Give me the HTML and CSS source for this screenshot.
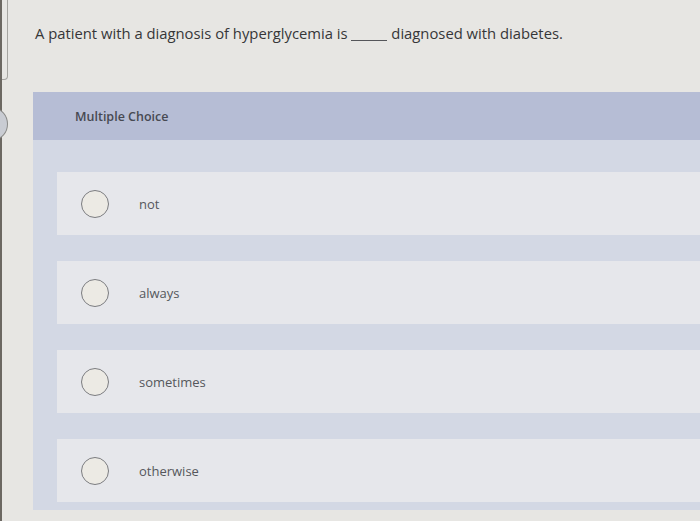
FILE: index.html
```html
<!DOCTYPE html>
<html lang="en">
<head>
<meta charset="utf-8">
<title>Multiple Choice</title>
<link rel="stylesheet" href="styles.css">
</head>
<body>
<div class="screen">
  <div class="edge"></div>
  <div class="side">
    <div class="side-box"></div>
    <div class="side-dot"></div>
  </div>
  <main class="main">
    <p class="question">A patient with a diagnosis of hyperglycemia is <span class="blank"></span> diagnosed with diabetes.</p>
    <section class="panel">
      <header class="panel-head">Multiple Choice</header>
      <div class="panel-body">
        <label class="option"><span class="radio"></span><span class="opt-text">not</span></label>
        <label class="option"><span class="radio"></span><span class="opt-text">always</span></label>
        <label class="option"><span class="radio"></span><span class="opt-text">sometimes</span></label>
        <label class="option"><span class="radio"></span><span class="opt-text">otherwise</span></label>
      </div>
    </section>
  </main>
</div>
</body>
</html>
```

FILE: styles.css
```css
html, body {
  margin: 0;
  padding: 0;
  background: #e7e6e3;
}
.screen {
  display: flex;
  width: 700px;
  height: 521px;
  overflow: hidden;
  font-family: "Open Sans", Lato, sans-serif;
  background: #e7e6e3;
}
.edge {
  width: 2px;
  flex: none;
  background: #6c6862;
}
.side {
  width: 6px;
  flex: none;
  display: flex;
  flex-direction: column;
}
.side-box {
  height: 90px;
  margin-top: -10px;
  border: 1px solid #a5a4a0;
  border-left: none;
  border-radius: 0 4px 4px 0;
  box-sizing: border-box;
  width: 6px;
}
.side-dot {
  width: 28px;
  height: 32px;
  margin-top: 28px;
  margin-left: -22px;
  border: 1px solid #8a8a88;
  border-radius: 50%;
  background: #c9ccd3;
  box-sizing: border-box;
}
.main {
  flex: 1;
  min-width: 0;
  padding-left: 25px;
}
.question {
  margin: 24px 0 0 2px;
  font-size: 14.8px;
  font-weight: 500;
  line-height: 18px;
  color: #363638;
  white-space: nowrap;
}
.blank {
  display: inline-block;
  width: 36px;
  border-bottom: 1px solid #55565a;
  vertical-align: -2px;
}
.panel {
  margin-top: 50px;
  background: #d3d8e4;
  padding-bottom: 8px;
}
.panel-head {
  height: 48px;
  display: flex;
  align-items: center;
  padding-left: 42px;
  background: #b6bdd5;
  font-size: 12.5px;
  font-weight: 600;
  color: #474952;
}
.panel-body {
  display: flex;
  flex-direction: column;
  gap: 26px;
  padding: 32px 0 0 24px;
}
.option {
  height: 63px;
  display: flex;
  align-items: center;
  padding-left: 24px;
  background: #e6e7eb;
}
.radio {
  width: 28px;
  height: 28px;
  box-sizing: border-box;
  border: 1.6px solid #7b7c80;
  border-radius: 50%;
  background: #eceae4;
  flex: none;
}
.opt-text {
  margin-left: 30px;
  font-size: 13px;
  color: #55575c;
}
```
